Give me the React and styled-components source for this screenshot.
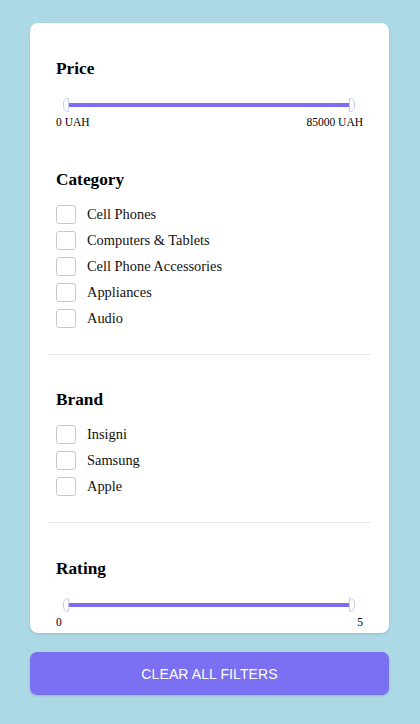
import React, { useState } from 'react';
import styled, { createGlobalStyle } from 'styled-components';

const GlobalStyle = createGlobalStyle`
  html, body {
    margin: 0;
    padding: 0;
    background: #add8e6;
  }

  body {
    font-family: "Liberation Serif", "Times New Roman", serif;
    font-size: 14.4px;
    color: #111;
  }
`

const Page = styled.div`
  display: flex;
  flex-direction: column;
  gap: 19px;
  padding: 23px 31px 0 30px;
  min-height: 724px;
  box-sizing: border-box;
`

const Card = styled.div`
  height: 609px;
  overflow: hidden;
  background: #fff;
  border-radius: 8px;
  padding: 1px 18px 0;
  box-shadow: 0 1px 3px rgba(0, 0, 0, 0.12);
`

const Section = styled.section`
  padding: ${(p) => p.top || 34}px 8px ${(p) => p.bottom}px;
  border-top: ${(p) => (p.divided ? '1px solid #e6e6e6' : 'none')};
`

const Heading = styled.h3`
  margin: 0;
  font-size: 17.3px;
  line-height: 22px;
  font-weight: bold;
  color: #000;
`

const List = styled.ul`
  list-style: none;
  margin: 10px 0 0;
  padding: 0;
`

const Row = styled.li`
  display: flex;
  align-items: center;
  gap: 11px;
  height: 26px;
  font-size: 14.4px;
`

const Box = styled.span`
  width: 18px;
  height: 17px;
  border: 1px solid #c9c9c9;
  border-radius: 3px;
  background: ${(p) => (p.checked ? '#7b68ee' : '#fff')};
  cursor: pointer;
  flex-shrink: 0;
`

const Slider = styled.div`
  margin-top: 18px;
`

const Track = styled.div`
  position: relative;
  height: 14px;
  display: flex;
  align-items: center;
  margin: 0 8px 0 7px;
  padding: 0 6px 0 4px;
`

const Fill = styled.div`
  flex: 1;
  height: 4px;
  background: #7b6cf0;
`

const Thumb = styled.span`
  position: absolute;
  top: 0;
  ${(p) => (p.side === 'left' ? 'left: 0;' : 'right: 0;')}
  width: 4px;
  height: 12px;
  background: #fff;
  border: 1px solid #c6cfe6;
  border-radius: ${(p) => (p.side === 'left' ? '5px 0 0 5px' : '0 5px 5px 0')};
`

const Scale = styled.div`
  display: flex;
  justify-content: space-between;
  margin-top: 3px;
  font-size: 11.5px;
  line-height: 15px;
  color: #000;
`

const ClearButton = styled.button`
  height: 43px;
  border: 0;
  border-radius: 7px;
  background: #7b6ff2;
  color: #fff;
  font-family: "Liberation Sans", Arial, sans-serif;
  font-size: 14px;
  letter-spacing: 0.1px;
  cursor: pointer;
  box-shadow: 0 1px 3px rgba(0, 0, 0, 0.15);
`

const categories = ['Cell Phones', 'Computers & Tablets', 'Cell Phone Accessories', 'Appliances', 'Audio'];
const brands = ['Insigni', 'Samsung', 'Apple'];

const Range = ({ min, max }) => (
  <Slider>
    <Track>
      <Thumb side="left" />
      <Fill />
      <Thumb side="right" />
    </Track>
    <Scale>
      <span>{min}</span>
      <span>{max}</span>
    </Scale>
  </Slider>
);

const CheckList = ({ items, checked, onToggle }) => (
  <List>
    {items.map((item) => (
      <Row key={item} onClick={() => onToggle(item)}>
        <Box checked={checked.includes(item)} />
        {item}
      </Row>
    ))}
  </List>
);

const App = () => {
  const [checked, setChecked] = useState([]);

  const toggle = (item) => {
    setChecked((prev) => (prev.includes(item) ? prev.filter((i) => i !== item) : [...prev, item]));
  };

  return (
    <>
      <GlobalStyle />
      <Page>
        <Card>
          <Section bottom={5}>
            <Heading>Price</Heading>
            <Range min="0 UAH" max="85000 UAH" />
          </Section>

          <Section bottom={23}>
            <Heading>Category</Heading>
            <CheckList items={categories} checked={checked} onToggle={toggle} />
          </Section>

          <Section divided bottom={23}>
            <Heading>Brand</Heading>
            <CheckList items={brands} checked={checked} onToggle={toggle} />
          </Section>

          <Section divided top={35} bottom={24}>
            <Heading>Rating</Heading>
            <Range min="0" max="5" />
          </Section>
        </Card>

        <ClearButton onClick={() => setChecked([])}>CLEAR ALL FILTERS</ClearButton>
      </Page>
    </>
  );
};

export default App;
